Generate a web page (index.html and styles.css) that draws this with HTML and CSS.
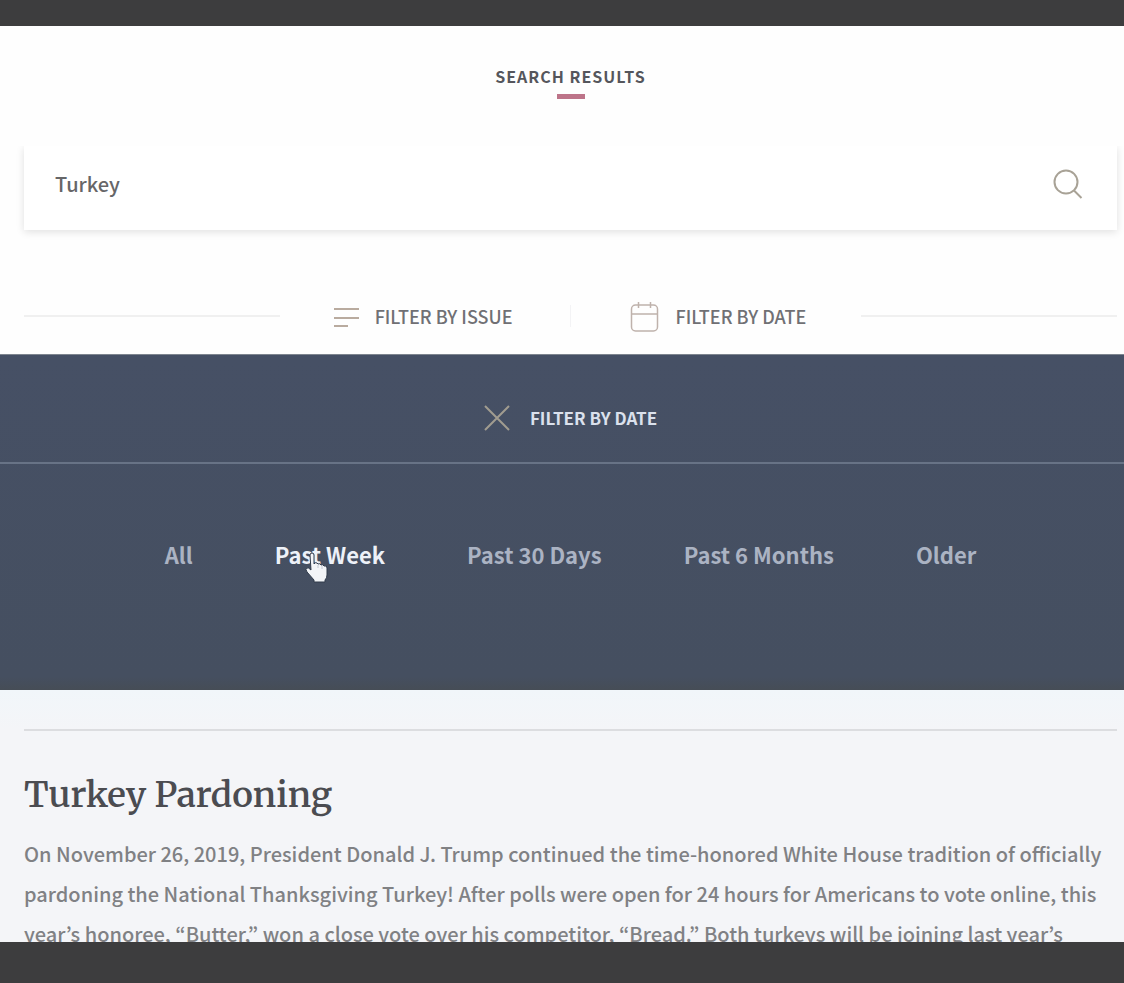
FILE: index.html
```html
<!DOCTYPE html>
<html lang="en">
<head>
<meta charset="utf-8">
<meta name="viewport" content="width=device-width, initial-scale=1">
<title>Search Results</title>
<link rel="stylesheet" href="styles.css">
</head>
<body>
<div class="page">
  <header class="masthead">
    <h1 class="masthead-title">SEARCH RESULTS</h1>
  </header>
  <form class="search" role="search">
    <input class="search-input" type="text" value="Turkey" aria-label="Search">
    <button class="search-button" type="button" aria-label="Submit search">
      <svg width="30" height="32" viewBox="0 0 30 32" fill="none" stroke="#a8a296" stroke-width="2"><circle cx="13" cy="14" r="11.5"/><path d="M21 22.500l7.500 7.500"/></svg>
    </button>
  </form>
  <div class="filters">
    <button class="filter" type="button">
      <svg width="26" height="24" viewBox="0 0 26 24" stroke="#b9ab9f" stroke-width="2"><path d="M1 5h25M1 14h25M1 22h14"/></svg>
      FILTER BY ISSUE
    </button>
    <span class="filter-divider"></span>
    <button class="filter filter-date" type="button">
      <svg width="30" height="32" viewBox="0 0 30 32" fill="none" stroke="#bfb2ac" stroke-width="1.500"><rect x="1.500" y="5" width="26" height="26" rx="4"/><path d="M2 14h25M8.500 2v6M20.500 2v6"/></svg>
      FILTER BY DATE
    </button>
  </div>
  <section class="panel">
    <div class="panel-head">
      <button class="panel-close" type="button">
        <svg width="26" height="26" viewBox="0 0 26 26" stroke="#a19c90" stroke-width="2"><path d="M1 1l24 24M25 1L1 25"/></svg>
        FILTER BY DATE
      </button>
    </div>
    <nav class="ranges" aria-label="Date range">
      <a class="range" href="#all">All</a>
      <a class="range range-active" href="#week">Past Week
        <svg class="pointer" width="24" height="32" viewBox="0 0 24 32"><path d="M5 3q0-2 2-2t2 2v9q1-2 3-1l1 1q2-1 3 1 2-1 3 1 3-1 3 2v7q0 3-2 5v2H9v-2l-7-8q-2-3 0-4 1-1 4 2z" fill="#f3f5f8" stroke="#303b4b" stroke-width="1"/><path d="M13 13v3M17 14v3" stroke="#c3cad4"/></svg>
      </a>
      <a class="range" href="#days">Past 30 Days</a>
      <a class="range" href="#months">Past 6 Months</a>
      <a class="range" href="#older">Older</a>
    </nav>
  </section>
  <main class="results">
    <article class="result">
      <h2 class="result-title">Turkey Pardoning</h2>
      <p class="result-text">On November 26, 2019, President Donald J. Trump continued the time-honored White House tradition of officially pardoning the National Thanksgiving Turkey! After polls were open for 24 hours for Americans to vote online, this year’s honoree, “Butter,” won a close vote over his competitor, “Bread.” Both turkeys will be joining last year’s</p>
    </article>
  </main>
</div>
</body>
</html>
```
FILE: styles.css
```css
* {
  box-sizing: border-box;
}

body {
  margin: 0;
  padding: 26px 0 41px;
  height: 100vh;
  background: #3d3d3e;
  font-family: "Source Sans Pro", "Noto Sans CJK KR", "Open Sans", sans-serif;
}

button {
  display: flex;
  align-items: center;
  padding: 0;
  border: 0;
  background: none;
  font: inherit;
  color: inherit;
}

svg {
  flex: none;
}

.page {
  height: 100%;
  overflow: hidden;
  background: #fefefe;
}

.masthead {
  position: relative;
  z-index: 1;
  display: flex;
  justify-content: center;
  height: 120px;
  padding: 38px 7px 0 24px;
  background: #fefefe;
}

.masthead-title {
  display: flex;
  flex-direction: column;
  align-items: center;
  gap: 6px;
  margin: 0;
  font-size: 16px;
  line-height: 24px;
  font-weight: 700;
  letter-spacing: 1px;
  color: #55565c;
}

.masthead-title::after {
  content: "";
  width: 28px;
  height: 5px;
  background: #bd7489;
}

.search {
  display: flex;
  align-items: center;
  height: 84px;
  margin: 0 7px 0 24px;
  padding: 0 34px 8px 31px;
  background: #fff;
  box-shadow: 0 2px 8px rgba(0, 0, 0, 0.12);
}

.search-input {
  flex: 1;
  min-width: 0;
  padding: 0;
  border: 0;
  background: none;
  font: inherit;
  font-size: 20px;
  line-height: 30px;
  font-weight: 500;
  color: #666668;
}

.filters {
  display: flex;
  align-items: center;
  height: 124px;
  padding: 48px 7px 0 24px;
  font-size: 18px;
  line-height: 28px;
  font-weight: 500;
  color: #707074;
}

.filters::before,
.filters::after {
  content: "";
  flex: 1;
  height: 2px;
  background: #f0f0f0;
}

.filters::before {
  margin-right: 53px;
}

.filters::after {
  margin-left: 55px;
}

.filter {
  gap: 16px;
}

.filter-divider {
  width: 1px;
  height: 22px;
  margin: 0 59px 0 57px;
  background: #f3f3f5;
}

.panel {
  height: 336px;
  border-top: 1px solid #7e858f;
  background: linear-gradient(#465065, #454f60 96%, #464d56);
}

.panel-head {
  display: flex;
  justify-content: center;
  height: 109px;
  padding: 0 7px 0 24px;
  border-bottom: 2px solid #687386;
}

.panel-close {
  padding-top: 18px;
  gap: 20px;
  font-size: 17px;
  font-weight: 700;
  color: #dbe1ed;
}

.ranges {
  display: flex;
  justify-content: center;
  gap: 82px;
  padding: 70px 7px 0 24px;
  font-size: 22px;
  line-height: 40px;
  font-weight: 700;
}

.range {
  position: relative;
  color: #abb3c3;
  text-decoration: none;
  white-space: nowrap;
}

.range-active {
  color: #edf1f8;
}

.pointer {
  position: absolute;
  left: 30px;
  top: 18px;
}

.results {
  padding: 39px 7px 0 24px;
  background: linear-gradient(#f1f6fa, #f4f5f8 39px);
}

.result {
  border-top: 2px solid #dcdde0;
}

.result-title {
  margin: 0;
  padding: 38px 0 13px;
  font-family: Merriweather, "Noto Serif", "DejaVu Serif Condensed", "DejaVu Serif", serif;
  font-size: 35px;
  line-height: 52px;
  font-weight: 600;
  color: #4b4c51;
}

.result-text {
  margin: 0;
  font-size: 20px;
  line-height: 40px;
  font-weight: 500;
  color: #808184;
}
```
